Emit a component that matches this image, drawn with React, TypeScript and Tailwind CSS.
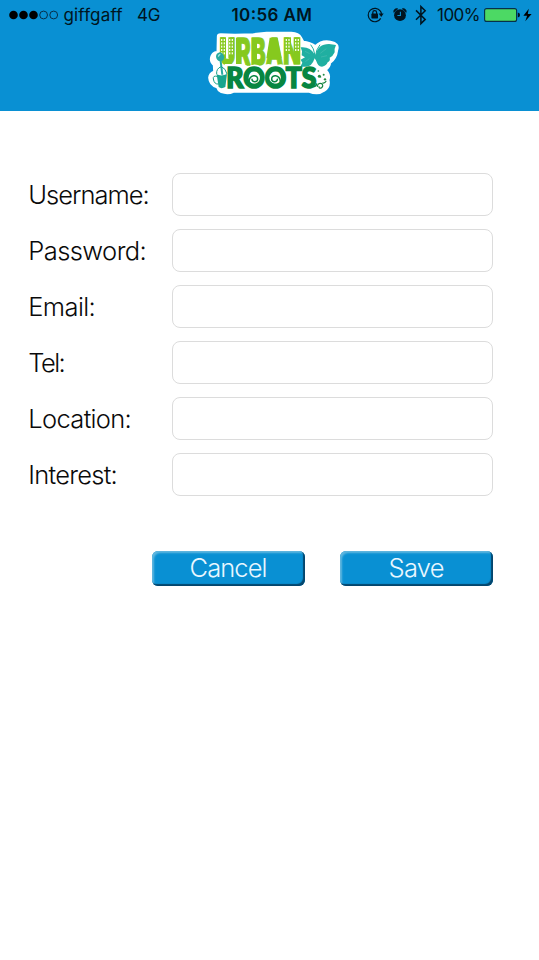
import React from "react";

const fields = [
  { label: "Username:", width: 121.5 },
  { label: "Password:", width: 118.5 },
  { label: "Email:", width: 67.5 },
  { label: "Tel:", width: 37.5 },
  { label: "Location:", width: 103.5 },
  { label: "Interest:", width: 89.5 },
];

function StatusBar() {
  return (
    <svg className="block h-[30px] w-full" viewBox="0 0 539 30" fontFamily="Inter, sans-serif" fill="#001420">
      <g fill="#000">
        <circle cx="13.5" cy="15" r="4.3" />
        <circle cx="23.5" cy="15" r="4.3" />
        <circle cx="33.5" cy="15" r="4.3" />
      </g>
      <g fill="none" stroke="#06304a" strokeWidth="1">
        <circle cx="43.6" cy="15" r="3.9" />
        <circle cx="53.7" cy="15" r="3.9" />
      </g>
      <text x="63.5" y="21" fontSize="17" textLength="59">giffgaff</text>
      <text x="137" y="21" fontSize="17" textLength="23.5">4G</text>
      <text x="231.5" y="21" fontSize="17" fontWeight="600" textLength="80.5">10:56 AM</text>
      <g fill="none" stroke="#001420" strokeWidth="1.2">
        <path d="M380.4 11.2a6.7 6.7 0 1 0 .3 7.2M380.4 11.2q1 1.4 1 3" />
        <path d="M372.8 14v-1.4a1.9 1.9 0 0 1 3.8 0V14" />
      </g>
      <rect x="371.4" y="13.6" width="6.6" height="4.8" rx=".6" />
      <path d="M378.7 13.6h5l-2.5 3.3z" />
      <circle cx="400" cy="15.2" r="5.9" />
      <path d="M393.8 12.4a3 3 0 0 1 4-3.6zM406.2 12.4a3 3 0 0 0-4-3.6z" stroke="#001420" strokeWidth=".6" />
      <path d="M400.4 11.7v3.8h-3" fill="none" stroke="#0990d2" strokeWidth="1.1" />
      <path d="M416 10.4l9.2 9-4.3 4.2V6.6l4.3 4.2-9.2 9" fill="none" stroke="#001420" strokeWidth="1.5" />
      <text x="437" y="21" fontSize="17" textLength="43.5">100%</text>
      <rect x="484.6" y="8.6" width="32" height="12.8" rx="2" fill="#4cd964" stroke="#06304a" strokeWidth="1.1" />
      <path d="M517.8 12.5q2.2.3 2.2 2.5t-2.2 2.5z" />
      <path d="M528.8 8.7l-5.4 7h3.7l-1.8 5.6 6.3-7.3h-3.8z" fill="#000" />
    </svg>
  );
}

function Windows({ x, y, cols, rows }: { x: number; y: number; cols: number; rows: number }) {
  return (
    <g fill="#f4fbe6">
      {Array.from({ length: cols * rows }, (_, i) => (
        <rect key={i} x={x + (i % cols) * 8} y={y + Math.floor(i / cols) * 10} width="4" height="6" />
      ))}
    </g>
  );
}

function Logo() {
  return (
    <svg className="block h-[81px] w-[145px]" viewBox="0 12 435 243" role="img" aria-label="Urban Roots">
      <path
        d="M54 31Q54 25 62 25L105 27 160 25 200 21 274 21Q296 22 302 34L310 48Q330 50 346 61 366 42 392 48 418 53 411 72 408 98 390 110 389 124 376 132 391 145 385 162 390 184 372 194 354 208 326 196L100 197Q84 205 64 198 54 193 51 183 29 177 28 155 29 142 43 137L42 117Q28 105 36 88 43 77 53 79Z"
        fill="#fff" stroke="#fff" strokeWidth="7" strokeLinejoin="round"
      />
      <text transform="translate(58 116) scale(1 1.36)" fill="#86c91e" stroke="#86c91e" strokeWidth="3" fontFamily="Inter, sans-serif" fontWeight="800" fontSize="80" textLength="243" lengthAdjust="spacingAndGlyphs">URBAN</text>
      <g fill="#86c91e">
        <path d="M61 34h17v62H61zM85 34h17v62H85zM253 34h20v50h-20zM281 34h20v82h-20zM209 35h24l12 62h-46zM108 36h16v80h-16zM155 36h16v80h-16z" />
      </g>
      <Windows x={63} y={39} cols={2} rows={5} />
      <Windows x={87} y={39} cols={2} rows={5} />
      <Windows x={257} y={39} cols={2} rows={4} />
      <Windows x={285} y={39} cols={2} rows={4} />
      <g fill="none" stroke="#fff" strokeWidth="8">
        <path d="M78 190V118h45q18 3 21 10Q162 112 182 126q22-15 42-2 14-7 26-4h52" />
      </g>
      <g fill="#20afa1">
        <path d="M347 88Q353 54 387 54L408 57Q402 69 404 79 399 91 389 95 392 104 383 109 380 119 366 122 352 120 349 104L344 97Q335 124 316 122L301 122 307 110 302 101 315 94 305 88 306 76 302 64Q330 61 343 84Z" />
        <path d="M345 88Q341 65 332 56M347 87Q348 72 360 56M343 84l8 22" fill="none" stroke="#20afa1" strokeWidth="3" />
      </g>
      <path d="M361 82l18-14M363 93l18-4M329 83l-14-7M328 98l-12 9" fill="none" stroke="#62c6bb" strokeWidth="1.2" />
      <text transform="translate(79 186) scale(1 .98)" fill="#078641" stroke="#078641" strokeWidth="5" fontFamily="Lato, sans-serif" fontWeight="900" fontSize="86" textLength="270" lengthAdjust="spacingAndGlyphs">ROOTS</text>
      <g fill="#fff">
        <circle cx="163" cy="155" r="17" />
        <circle cx="225" cy="155" r="17" />
      </g>
      <g fill="none" stroke="#078641" strokeWidth="4.5" strokeLinecap="round">
        <path d="M147 166c2-21 26-21 26-7 0 11-17 11-17 1" />
        <path d="M241 166c-2-21-26-21-26-7 0 11 17 11 17 1" />
        <path d="M335 181q12 4 15-7" />
      </g>
      <path d="M50 145q14 7 31-1l-5 39q-12 7-20 0z" fill="#18a58e" />
      <path d="M48 92q0-10 11-13 11 2 14 14-1 10-8 12l5 41h-6l-5-40q-9-3-11-14z" fill="#26aaa1" />
      <path d="M55 92q1-6 6-7" fill="none" stroke="#b3e6df" strokeWidth="4" />
      <path d="M50 145q-2-18 14-23 13 5 17 22M52 151q-14-3-12 8 3 17 16 15" fill="none" stroke="#16a087" strokeWidth="3" />
      <g fill="none" stroke="#12823e" strokeWidth="3.5" strokeLinecap="round">
        <path d="M352 181q2-12 13-8 7 7-1 13-7 2-7-4" />
        <path d="M368 171q7 1 10-5M359 150l3 3" />
      </g>
      <g fill="#248b43">
        <circle cx="355" cy="135" r="2.5" />
        <circle cx="358" cy="151" r="4.5" />
        <circle cx="371" cy="146" r="3" />
        <circle cx="375" cy="160" r="3.5" />
      </g>
    </svg>
  );
}

function ActionButton({ label, width }: { label: string; width: number }) {
  return (
    <button className="flex h-[35px] w-[153px] items-start justify-center rounded-[6px] bg-[#0990d3] shadow-[inset_-2px_-2px_1px_#05466d,inset_2px_2px_2px_#61b7df]">
      <svg className="block h-[34px] w-[153px]" viewBox="0 0 153 34">
        <text x={(153 - width) / 2 - 0.5} y="25.5" fill="#e8f7ff" fontFamily="Inter, sans-serif" fontWeight="300" fontSize="25.5" textLength={width + 1}>{label}</text>
      </svg>
    </button>
  );
}

export default function App() {
  return (
    <main className="h-[960px] w-[539px] overflow-hidden bg-white">
      <header className="flex h-[111px] flex-col bg-[#0990d3]">
        <StatusBar />
        <div className="pl-[200px]"><Logo /></div>
      </header>
      <form className="pl-[28px] pr-[46px] pt-[62px]" onSubmit={(event) => event.preventDefault()}>
        <div className="flex flex-col gap-[13px]">
          {fields.map(({ label, width }) => (
            <label key={label} className="flex h-[43px] items-center">
              <svg className="block h-[43px] w-[144px] shrink-0" viewBox="0 0 144 43">
                <text x="0.3" y="31" fill="#0a0a0a" fontFamily="Inter, sans-serif" fontWeight="300" fontSize="25.5" textLength={width}>{label}</text>
              </svg>
              <input aria-label={label} className="h-[43px] w-[321px] rounded-[8px] border border-[#dcdcdc] bg-white px-3 text-xl outline-none" />
            </label>
          ))}
        </div>
        <div className="mt-[55px] flex justify-end gap-[35px]">
          <ActionButton label="Cancel" width={77} />
          <ActionButton label="Save" width={55} />
        </div>
      </form>
    </main>
  );
}
